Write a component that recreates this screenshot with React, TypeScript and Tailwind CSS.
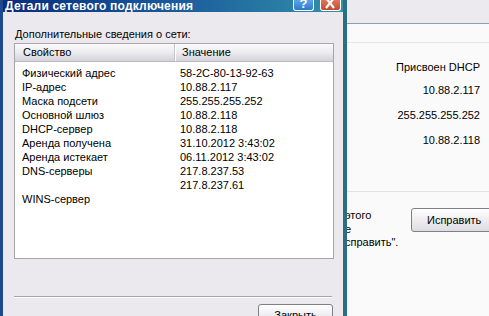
const ROWS: [string, string][] = [
  ['Физический адрес', '58-2C-80-13-92-63'],
  ['IP-адрес', '10.88.2.117'],
  ['Маска подсети', '255.255.255.252'],
  ['Основной шлюз', '10.88.2.118'],
  ['DHCP-сервер', '10.88.2.118'],
  ['Аренда получена', '31.10.2012 3:43:02'],
  ['Аренда истекает', '06.11.2012 3:43:02'],
  ['DNS-серверы', '217.8.237.53'],
  ['', '217.8.237.61'],
  ['WINS-сервер', ''],
]

function TitleBar() {
  return (
    <div className="flex h-[12px] items-start bg-gradient-to-r from-[#0a2c7c] via-[#1b5a9c] to-[#3491a8]">
      <span className="ml-[2px] text-[12px] font-bold leading-[12px] tracking-[0.2px] text-white">
        Детали сетевого подключения
      </span>
      <div className="ml-auto flex gap-[6px] pr-[2px]">
        <div className="flex h-[11px] w-[21px] items-end justify-center overflow-hidden rounded-b-[3px] border border-t-0 border-white bg-gradient-to-b from-[#5aa6e4] to-[#2f78cc]">
          <span className="text-[13px] font-bold leading-[13px] text-white">?</span>
        </div>
        <div className="flex h-[11px] w-[21px] items-end justify-center overflow-hidden rounded-b-[3px] border border-t-0 border-white bg-gradient-to-b from-[#e2745a] to-[#c14a30]">
          <svg width="11" height="9" viewBox="0 0 11 9" className="mb-[1px]">
            <path d="M1 -2 L9 8 M9 -2 L1 8" stroke="white" strokeWidth="2.2" />
          </svg>
        </div>
      </div>
    </div>
  )
}

function ListBox() {
  return (
    <div className="ml-[11px] mt-[2px] h-[216px] w-[320px] border border-[#a5a5aa] bg-white">
      <div className="flex h-[18px] border-b border-[#b9b9c0] bg-gradient-to-b from-[#fbfbfc] via-[#ececef] to-[#d3d2d9] pr-[1px]">
        <div className="flex w-[160px] items-center border-r border-[#c4c4ca] pl-[8px]">Свойство</div>
        <div className="flex flex-1 items-center rounded-r-[3px] border-l border-white pl-[6px]">Значение</div>
      </div>
      <div className="grid grid-cols-[158px_1fr] pl-[7px] pt-[4px]">
        {ROWS.map(([k, v], i) => (
          <div key={i} className="contents">
            <div className="h-[14px] leading-[14px]">{k}</div>
            <div className="h-[14px] leading-[14px]">{v}</div>
          </div>
        ))}
      </div>
    </div>
  )
}

function Dialog() {
  return (
    <div className="flex w-[347px] shrink-0 flex-col border-l-[3px] border-r-[4px] border-l-[#1c4a8c] border-r-[#2b6f82]">
      <TitleBar />
      <div className="flex-1 bg-[#ece9ee] pt-[16px]">
        <div className="ml-[12px] leading-[13px]">Дополнительные сведения о сети:</div>
        <ListBox />
        <div className="ml-[11px] mt-[37px] h-[2px] w-[318px] border-y border-t-[#a5a5aa] border-b-white" />
        <div className="ml-[255px] mt-[6px] flex h-[23px] w-[75px] items-center justify-center rounded-[3px] border border-[#7f7f86] bg-gradient-to-b from-white to-[#dcdce2]">
          Закрыть
        </div>
      </div>
    </div>
  )
}

function Behind() {
  return (
    <div className="flex flex-1 flex-col overflow-hidden bg-[#fafafb]">
      <div className="h-[24px] border-b border-[#8f9db2] bg-[#eceaee]" />
      <div className="h-[19px] border-b border-[#e6e6ea]" />
      <div className="flex flex-col items-end pr-[9px] leading-[13px]">
        <div className="mt-[18px]">Присвоен DHCP</div>
        <div className="mt-[10px]">10.88.2.117</div>
        <div className="mt-[12px]">255.255.255.252</div>
        <div className="mt-[12px]">10.88.2.118</div>
      </div>
      <div className="mt-[44px] h-0 border-t border-[#e2e2e6]" />
      <div className="mt-[16px] flex items-start">
        <div className="-ml-[2px] mt-[1px] w-[66px] shrink-0 leading-[13.5px]">
          <div>этого</div>
          <div>е</div>
          <div>справить".</div>
        </div>
        <div className="flex h-[24px] w-[84px] shrink-0 items-center rounded-[3px] border border-[#7f7f86] bg-gradient-to-b from-white to-[#dcdce2] pl-[15px]">
          Исправить
        </div>
      </div>
    </div>
  )
}

export default function App() {
  return (
    <div className="flex h-[316px] w-[489px] overflow-hidden font-['Liberation_Sans',Arial,sans-serif] text-[11px] text-black">
      <Dialog />
      <Behind />
    </div>
  )
}
